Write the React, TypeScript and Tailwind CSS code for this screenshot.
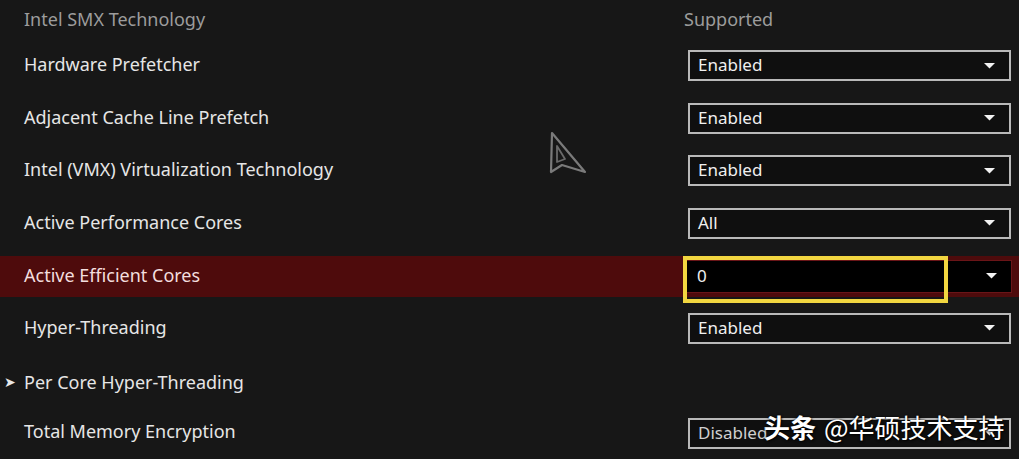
import React from "react";

const font = { fontFamily: '"Noto Sans", "Open Sans", sans-serif' };

function Arrow() {
  return (
    <svg width="11" height="6" viewBox="0 0 11 6" className="shrink-0">
      <path d="M0 0 L11 0 L5.5 5.5 Z" fill="#f2f2f2" />
    </svg>
  );
}

function Dropdown({ value, dim }: { value: string; dim?: boolean }) {
  return (
    <div className="w-[323px] h-[31px] -mt-[1px] border-2 border-[#b9b9b9] bg-[#0f0f0f] flex items-center justify-between pl-[8px] pr-[14px]">
      <span className={`text-[17px] leading-none -mt-[2px] ${dim ? "text-[#cfcfcf]" : "text-[#f0f0f0]"}`}>{value}</span>
      <Arrow />
    </div>
  );
}

function Row({ label, value, arrow, dim, shift }: { label: string; value?: string; arrow?: boolean; dim?: boolean; shift?: string }) {
  return (
    <div className="h-[52.5px] flex items-center justify-between pr-[8px]">
      <div className={`relative flex items-center pl-[24px] ${shift ?? "-mt-[4px]"}`}>
        {arrow && (
          <span className="absolute left-[4px] text-[14px] text-[#e8e8e8] leading-none">➤</span>
        )}
        <span className="text-[18px] text-[#e6e6e6] leading-none">{label}</span>
      </div>
      {value && <Dropdown value={value} dim={dim} />}
    </div>
  );
}

function Cursor() {
  return (
    <svg width="40" height="44" viewBox="0 0 40 44" className="absolute left-[548px] top-[131px]">
      <path d="M4 2 L37 41 L14 34 L3 41 Z" fill="none" stroke="#7a7a7a" strokeWidth="2.2" strokeLinejoin="round" />
      <path d="M9 15 L17 28 L9 31 Z" fill="none" stroke="#6a6a6a" strokeWidth="1.8" strokeLinejoin="round" />
    </svg>
  );
}

export default function App() {
  return (
    <div className="relative w-[1019px] h-[459px] bg-[#171717] overflow-hidden" style={font}>
      <div className="h-[39.75px] flex items-center">
        <span className="pl-[24px] w-[684px] text-[18px] text-[#9c9c9c] leading-none -mt-[2px]">Intel SMX Technology</span>
        <span className="text-[18px] text-[#9c9c9c] leading-none -mt-[2px]">Supported</span>
      </div>
      <Row label="Hardware Prefetcher" value="Enabled" />
      <Row label="Adjacent Cache Line Prefetch" value="Enabled" />
      <Row label="Intel (VMX) Virtualization Technology" value="Enabled" />
      <Row label="Active Performance Cores" value="All" />
      <div className="h-[52.5px] flex items-center">
        <div className="relative w-full h-[41px] bg-[#4e0b0c] flex items-center justify-between pr-[7px]">
          <span className="pl-[24px] text-[18px] text-[#f3dede] leading-none -mt-[3px]">Active Efficient Cores</span>
          <div className="relative w-[328px] h-[33px] bg-black border border-[#6a1518] flex items-center justify-between pl-[12px] pr-[14px]">
            <span className="text-[17px] text-[#f0f0f0] leading-none -mt-[2px]">0</span>
            <Arrow />
            <div className="absolute -left-[2px] -top-[5px] w-[265px] h-[47px] border-[4px] border-[#f2d640]" />
          </div>
        </div>
      </div>
      <Row label="Hyper-Threading" value="Enabled" />
      <Row label="Per Core Hyper-Threading" arrow shift="mt-[2px]" />
      <Row label="Total Memory Encryption" value="Disabled" dim shift="-mt-[6px]" />
      <Cursor />
      <div
        className="absolute left-[764px] top-[414px] flex items-center text-white text-[26px] leading-none"
        style={{ fontFamily: '"Noto Sans CJK SC", sans-serif', textShadow: "0 0 3px rgba(0,0,0,0.9), 1px 1px 2px rgba(0,0,0,0.8)" }}
      >
        <span className="font-bold">头条</span>
        <span className="ml-[8px]">@华硕技术支持</span>
      </div>
    </div>
  );
}
